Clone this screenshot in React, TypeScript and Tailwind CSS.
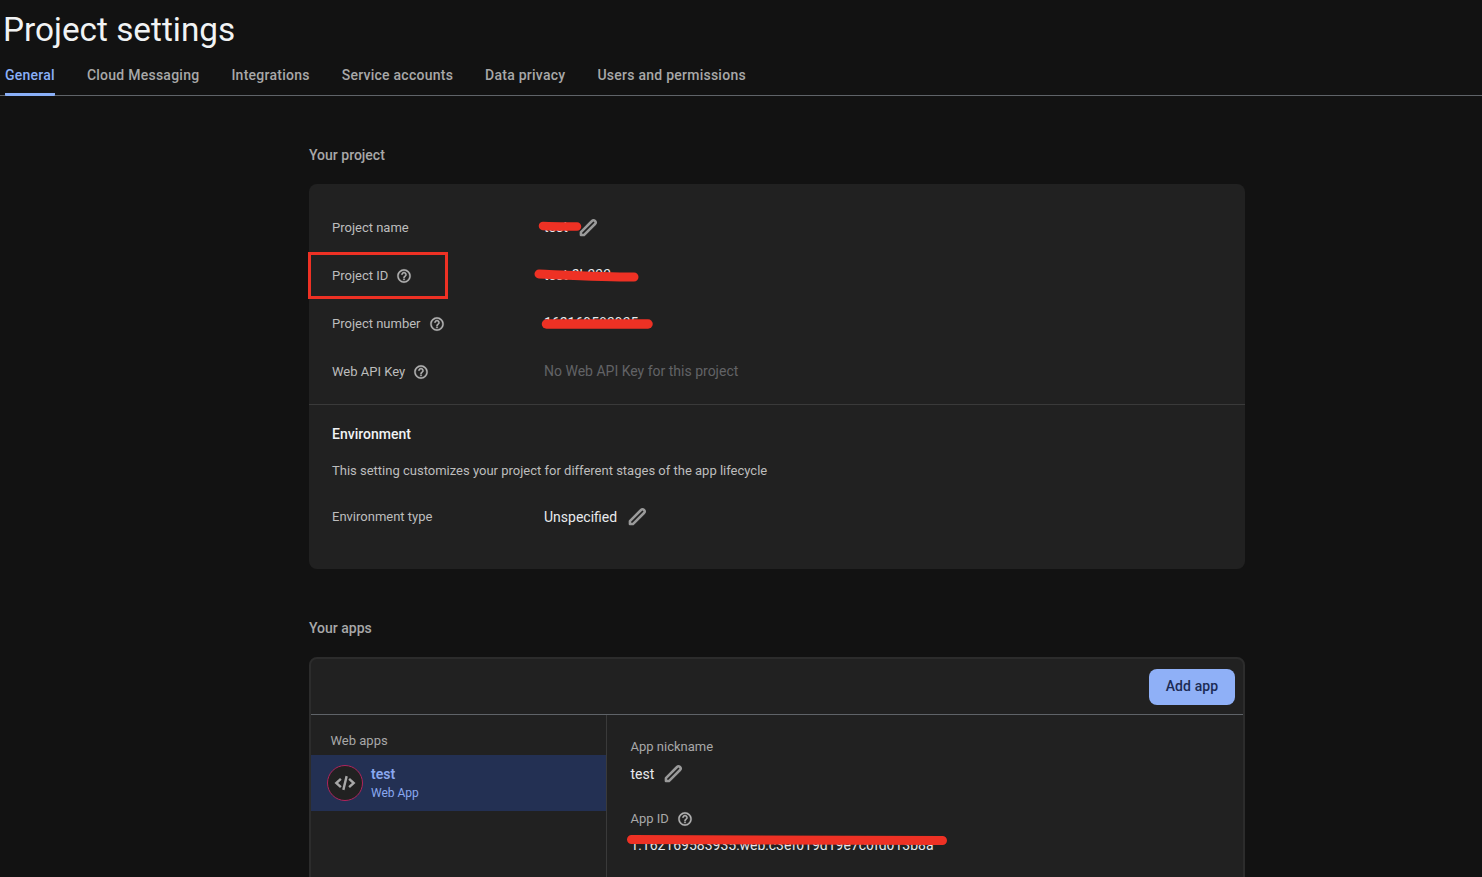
import type { ReactNode } from 'react'

const TABS = ['General', 'Cloud Messaging', 'Integrations', 'Service accounts', 'Data privacy', 'Users and permissions']

function HelpIcon() {
  return (
    <svg viewBox="0 0 24 24" className="w-4 h-4 -mt-px fill-[#b4b4b4] stroke-[#b4b4b4] stroke-[0.5] shrink-0">
      <path d="M11 18h2v-2h-2v2zm1-16C6.48 2 2 6.48 2 12s4.48 10 10 10 10-4.48 10-10S17.52 2 12 2zm0 18c-4.41 0-8-3.59-8-8s3.59-8 8-8 8 3.59 8 8-3.59 8-8 8zm0-14c-2.21 0-4 1.79-4 4h2c0-1.1.9-2 2-2s2 .9 2 2c0 2-3 1.75-3 5h2c0-2.25 3-2.5 3-5 0-2.21-1.79-4-4-4z" />
    </svg>
  )
}

function PencilIcon() {
  return (
    <svg viewBox="0 0 24 24" className="w-5 h-5 fill-none stroke-[#9a9a9a] stroke-[3] shrink-0">
      <path d="M3.5 20.5v-3.6L16.8 3.6a2.5 2.5 0 0 1 3.6 3.6L7.1 20.5z" strokeLinejoin="round" />
    </svg>
  )
}

// red marker strokes painted over the screenshot
function Scribble({ d, className }: { d: string; className: string }) {
  return (
    <svg className={`absolute overflow-visible fill-none stroke-[#ee3124] ${className}`} width="1" height="1">
      <path d={d} strokeLinecap="round" />
    </svg>
  )
}

function Row({ label, help, children }: { label: string; help?: boolean; children?: ReactNode }) {
  return (
    <div className="flex items-center h-12 pl-[23px]">
      <div className="w-[212px] flex items-center gap-2 pt-0.5 text-[13px] text-[#bdbdbd]">
        {label}
        {help && <HelpIcon />}
      </div>
      <div className="relative flex items-center text-sm text-[#e8eaed]">{children}</div>
    </div>
  )
}

export default function App() {
  return (
    <div className="h-[877px] overflow-hidden bg-[#121212] font-['Roboto',sans-serif]">
      <div className="h-[96px] border-b border-[#5f6368]">
        <h1 className="h-[56px] pl-[3px] pt-[8px] text-[33.3px] leading-[44px] text-[#f1f3f4]">Project settings</h1>
        <div className="flex gap-8 pl-[5px]">
          {TABS.map((tab, i) => (
            <div
              key={tab}
              className={`h-[40px] pt-[10px] text-sm leading-[18px] font-medium tracking-[0.25px] ${
                i === 0 ? 'text-[#8ab0f8] border-b-[3px] border-[#8ab0f8] rounded-b-[1px]' : 'text-[#a8a8a8]'
              }`}
            >
              {tab}
            </div>
          ))}
        </div>
      </div>

      <div className="ml-[309px] w-[936px]">
        <h2 className="h-[88px] pt-[50px] text-sm leading-[18px] font-medium text-[#a8a8a8]">Your project</h2>

        <div className="h-[385px] rounded-lg bg-[#212121] pt-[19px]">
          <Row label="Project name">
            <span>test</span>
            <span className="ml-2.5 mt-0.5">
              <PencilIcon />
            </span>
            <Scribble d="M-1 -1 C8 -0.5 24 -0.5 33 -0.5" className="left-0 top-1/2 stroke-[8.5]" />
          </Row>
          <div className="relative">
            <Row label="Project ID" help>
              <span>test-2b333</span>
              <Scribble d="M-5 -1 C20 0 60 2 90 2" className="left-0 top-1/2 stroke-[9]" />
            </Row>
            <div className="absolute left-[-1px] top-[1px] w-[140px] h-[47px] border-[3px] border-[#ee3124]" />
          </div>
          <Row label="Project number" help>
            <span>162169583935</span>
            <Scribble d="M2.5 1 H104" className="left-0 top-1/2 stroke-[9.5]" />
          </Row>
          <Row label="Web API Key" help>
            <span className="text-[#626366]">No Web API Key for this project</span>
          </Row>

          <div className="mt-[9px] border-t border-[#3a3a3a] pl-[23px]">
            <h3 className="mt-[20px] text-sm leading-[18px] font-medium text-[#f1f3f4]">Environment</h3>
            <p className="mt-[19px] text-[13px] leading-[18px] text-[#bdbdbd]">
              This setting customizes your project for different stages of the app lifecycle
            </p>
            <div className="flex items-center mt-[17px] h-[40px]">
              <div className="w-[212px] text-[13px] text-[#bdbdbd]">Environment type</div>
              <div className="flex items-center gap-2.5 text-sm text-[#e8eaed]">
                Unspecified
                <PencilIcon />
              </div>
            </div>
          </div>
        </div>

        <h2 className="h-[88px] pt-[50px] text-sm leading-[18px] font-medium text-[#a8a8a8]">Your apps</h2>

        <div className="h-[300px] rounded-t-lg border-2 border-[#2c2c2c] bg-[#212121]">
          <div className="h-[56px] flex items-start justify-end pt-[10px] pr-2 border-b border-[#5f6368]">
            <button className="h-9 w-[86px] pb-0.5 rounded-lg bg-[#8fb0f7] text-sm font-medium tracking-[0.1px] text-[#1c2b55]">Add app</button>
          </div>
          <div className="flex">
            <div className="w-[296px] h-[300px] border-r border-[#3a3a3a]">
              <div className="h-[40px] pl-[19.5px] pt-[17px] text-[13px] leading-[18px] text-[#a8a8a8]">Web apps</div>
              <div className="h-[56px] flex items-center gap-2 pl-4 bg-[#233053]">
                <div className="w-9 h-9 rounded-full border border-[#b0245c] bg-[#212121] flex items-center justify-center">
                  <svg viewBox="0 0 24 24" className="w-[22px] h-[22px] fill-none stroke-[#a8a8a8] stroke-[2.6]">
                    <path d="M7.5 7.5 2.5 12l5 4.5M16.5 7.5l5 4.5-5 4.5M13.8 4.5l-3.6 15" />
                  </svg>
                </div>
                <div className="-mt-px">
                  <div className="text-sm leading-[18px] font-semibold text-[#8aa8f0]">test</div>
                  <div className="mt-0.5 text-xs leading-[16px] text-[#8aa8f0]">Web App</div>
                </div>
              </div>
            </div>
            <div className="pl-[23.5px]">
              <div className="pt-[23px] text-[13px] leading-[18px] text-[#a8a8a8]">App nickname</div>
              <div className="flex items-center gap-[9px] mt-[8px] h-5 text-sm text-[#e8eaed]">
                test
                <PencilIcon />
              </div>
              <div className="flex items-center gap-2 mt-[26px] text-[13px] leading-[18px] text-[#a8a8a8]">
                App ID
                <HelpIcon />
              </div>
              <div className="relative mt-[8px] text-sm leading-[18px] text-[#e8eaed]">
                1:162169583935:web:c3ef019d19e7c0fd013b8a
                <Scribble d="M0.5 3.5 C60 3 180 3.5 311.5 4.5" className="left-0 top-0 stroke-[9]" />
              </div>
            </div>
          </div>
        </div>
      </div>
    </div>
  )
}
